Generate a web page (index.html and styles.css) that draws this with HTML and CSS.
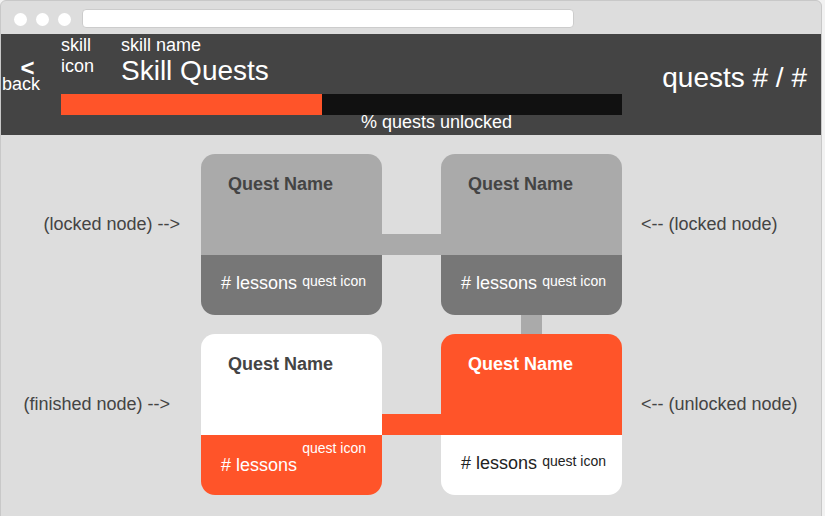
FILE: index.html
```html
<!DOCTYPE html>
<html lang="en">
<head>
<meta charset="utf-8">
<title>Skill Quests</title>
<link rel="stylesheet" href="styles.css">
</head>
<body>
<div class="window">
  <div class="chrome">
    <span class="dot"></span>
    <span class="dot"></span>
    <span class="dot"></span>
    <div class="url"></div>
  </div>
  <header class="topbar">
    <div class="back"><span class="back-arrow">&lt;</span><span class="back-label">back</span></div>
    <div class="skill-main">
      <div class="skill-row">
        <div class="skill-icon">skill<br>icon</div>
        <div class="title-block">
          <div class="skill-name">skill name</div>
          <h1 class="skill-title">Skill Quests</h1>
        </div>
      </div>
      <div class="progress"><div class="progress-fill" style="width:46.5%"></div></div>
      <div class="progress-caption">% quests unlocked</div>
    </div>
    <div class="quest-count">quests # / #</div>
  </header>
  <main class="tree">
    <div class="label label-left label-r1">(locked node) --&gt;</div>
    <div class="card card-locked cell-c2r1">
      <div class="card-top"><div class="quest-name">Quest Name</div></div>
      <div class="card-bottom"><span class="lessons"># lessons</span><span class="quest-icon">quest icon</span></div>
    </div>
    <div class="link link-h link-gray cell-c3r1"></div>
    <div class="card card-locked cell-c4r1">
      <div class="card-top"><div class="quest-name">Quest Name</div></div>
      <div class="card-bottom"><span class="lessons"># lessons</span><span class="quest-icon">quest icon</span></div>
    </div>
    <div class="label label-right label-r1">&lt;-- (locked node)</div>

    <div class="link link-v link-gray cell-c4r2"></div>

    <div class="label label-left label-finished label-r3">(finished node) --&gt;</div>
    <div class="card card-finished cell-c2r3">
      <div class="card-top"><div class="quest-name">Quest Name</div></div>
      <div class="card-bottom"><span class="lessons"># lessons</span><span class="quest-icon">quest icon</span></div>
    </div>
    <div class="link link-h link-orange cell-c3r3"></div>
    <div class="card card-unlocked cell-c4r3">
      <div class="card-top"><div class="quest-name">Quest Name</div></div>
      <div class="card-bottom"><span class="lessons"># lessons</span><span class="quest-icon">quest icon</span></div>
    </div>
    <div class="label label-right label-r3">&lt;-- (unlocked node)</div>
  </main>
</div>
</body>
</html>
```

FILE: styles.css
```css
* { box-sizing: border-box; }

html, body {
  margin: 0;
  padding: 0;
  background: #f2f2f2;
  font-family: "Liberation Sans", Arial, sans-serif;
  font-size: 18px;
  line-height: 21px;
}

.window {
  width: 822px;
  height: 520px;
  border: 1px solid #c8c8c8;
  border-radius: 6px 6px 0 0;
  background: #dddddd;
  overflow: hidden;
}

/* browser chrome */
.chrome {
  height: 33px;
  display: flex;
  align-items: flex-start;
  padding-left: 13px;
}
.dot {
  width: 13px;
  height: 13px;
  border-radius: 50%;
  background: #ffffff;
  margin-top: 12px;
  margin-right: 9px;
}
.url {
  margin-left: 2px;
  margin-top: 8px;
  width: 492px;
  height: 19px;
  background: #ffffff;
  border: 1px solid #cccccc;
  border-radius: 4px;
}

/* top bar */
.topbar {
  height: 101px;
  background: #444444;
  color: #ffffff;
  display: flex;
  align-items: flex-start;
}
.back {
  width: 40px;
  display: flex;
  flex-direction: column;
  align-items: center;
  padding-top: 26px;
}
.back-arrow {
  margin-left: 13px;
  font-size: 24px;
  font-weight: bold;
  line-height: 16px;
}
.back-label {
  line-height: 17px;
}
.skill-main {
  margin-left: 20px;
  width: 561px;
}
.skill-row {
  display: flex;
}
.skill-icon {
  width: 60px;
  padding-top: 1px;
}
.skill-name {
  padding-top: 1px;
  line-height: 21px;
}
.skill-title {
  margin: 1px 0 0 0;
  font-size: 28px;
  font-weight: normal;
  line-height: 28px;
}
.progress {
  margin-top: 9px;
  height: 21px;
  background: #111111;
}
.progress-fill {
  height: 100%;
  background: #ff5429;
}
.progress-caption {
  margin-top: -3px;
  padding-left: 300px;
  font-size: 18px;
  line-height: 20px;
}
.quest-count {
  margin-left: auto;
  padding-right: 14px;
  padding-top: 28px;
  font-size: 28px;
  line-height: 32px;
}

/* quest tree */
.tree {
  display: grid;
  grid-template-columns: 200px 181px 59px 181px 1fr;
  grid-template-rows: 161px 19px 161px;
  padding-top: 19px;
}
.cell-c2r1 { grid-column: 2; grid-row: 1; }
.cell-c3r1 { grid-column: 3; grid-row: 1; }
.cell-c4r1 { grid-column: 4; grid-row: 1; }
.cell-c4r2 { grid-column: 4; grid-row: 2; }
.cell-c2r3 { grid-column: 2; grid-row: 3; }
.cell-c3r3 { grid-column: 3; grid-row: 3; }
.cell-c4r3 { grid-column: 4; grid-row: 3; }

.label {
  color: #444444;
  padding-top: 60px;
  white-space: nowrap;
}
.label-r1 { grid-row: 1; }
.label-r3 { grid-row: 3; }
.label-left {
  grid-column: 1;
  text-align: right;
  padding-right: 21px;
}
.label-finished { padding-right: 31px; }
.label-right {
  grid-column: 5;
  padding-left: 19px;
}

.link-h {
  align-self: start;
  margin-top: 80px;
  height: 21px;
}
.link-v {
  justify-self: start;
  margin-left: 80px;
  width: 21px;
}
.link-gray { background: #aaaaaa; }
.link-orange { background: #ff5429; }

.card {
  display: flex;
  flex-direction: column;
  border-radius: 14px;
  overflow: hidden;
}
.card-top {
  height: 101px;
  flex: none;
  padding: 20px 27px 0;
}
.quest-name {
  font-weight: bold;
  color: #444444;
}
.card-bottom {
  flex: 1;
  display: flex;
  justify-content: space-between;
  align-items: flex-start;
  padding: 18px 16px 0 20px;
  color: #ffffff;
}
.quest-icon {
  font-size: 14px;
  line-height: 16px;
}

.card-locked .card-top { background: #aaaaaa; }
.card-locked .card-bottom { background: #777777; }

.card-finished .card-top { background: #ffffff; }
.card-finished .card-bottom {
  background: #ff5429;
  flex-direction: column;
  justify-content: flex-start;
  padding-top: 5px;
}
.card-finished .quest-icon {
  order: -1;
  align-self: flex-end;
}
.card-finished .lessons { margin-top: -1px; }

.card-unlocked .card-top { background: #ff5429; }
.card-unlocked .quest-name { color: #ffffff; }
.card-unlocked .card-bottom {
  background: #ffffff;
  color: #222222;
}
```
